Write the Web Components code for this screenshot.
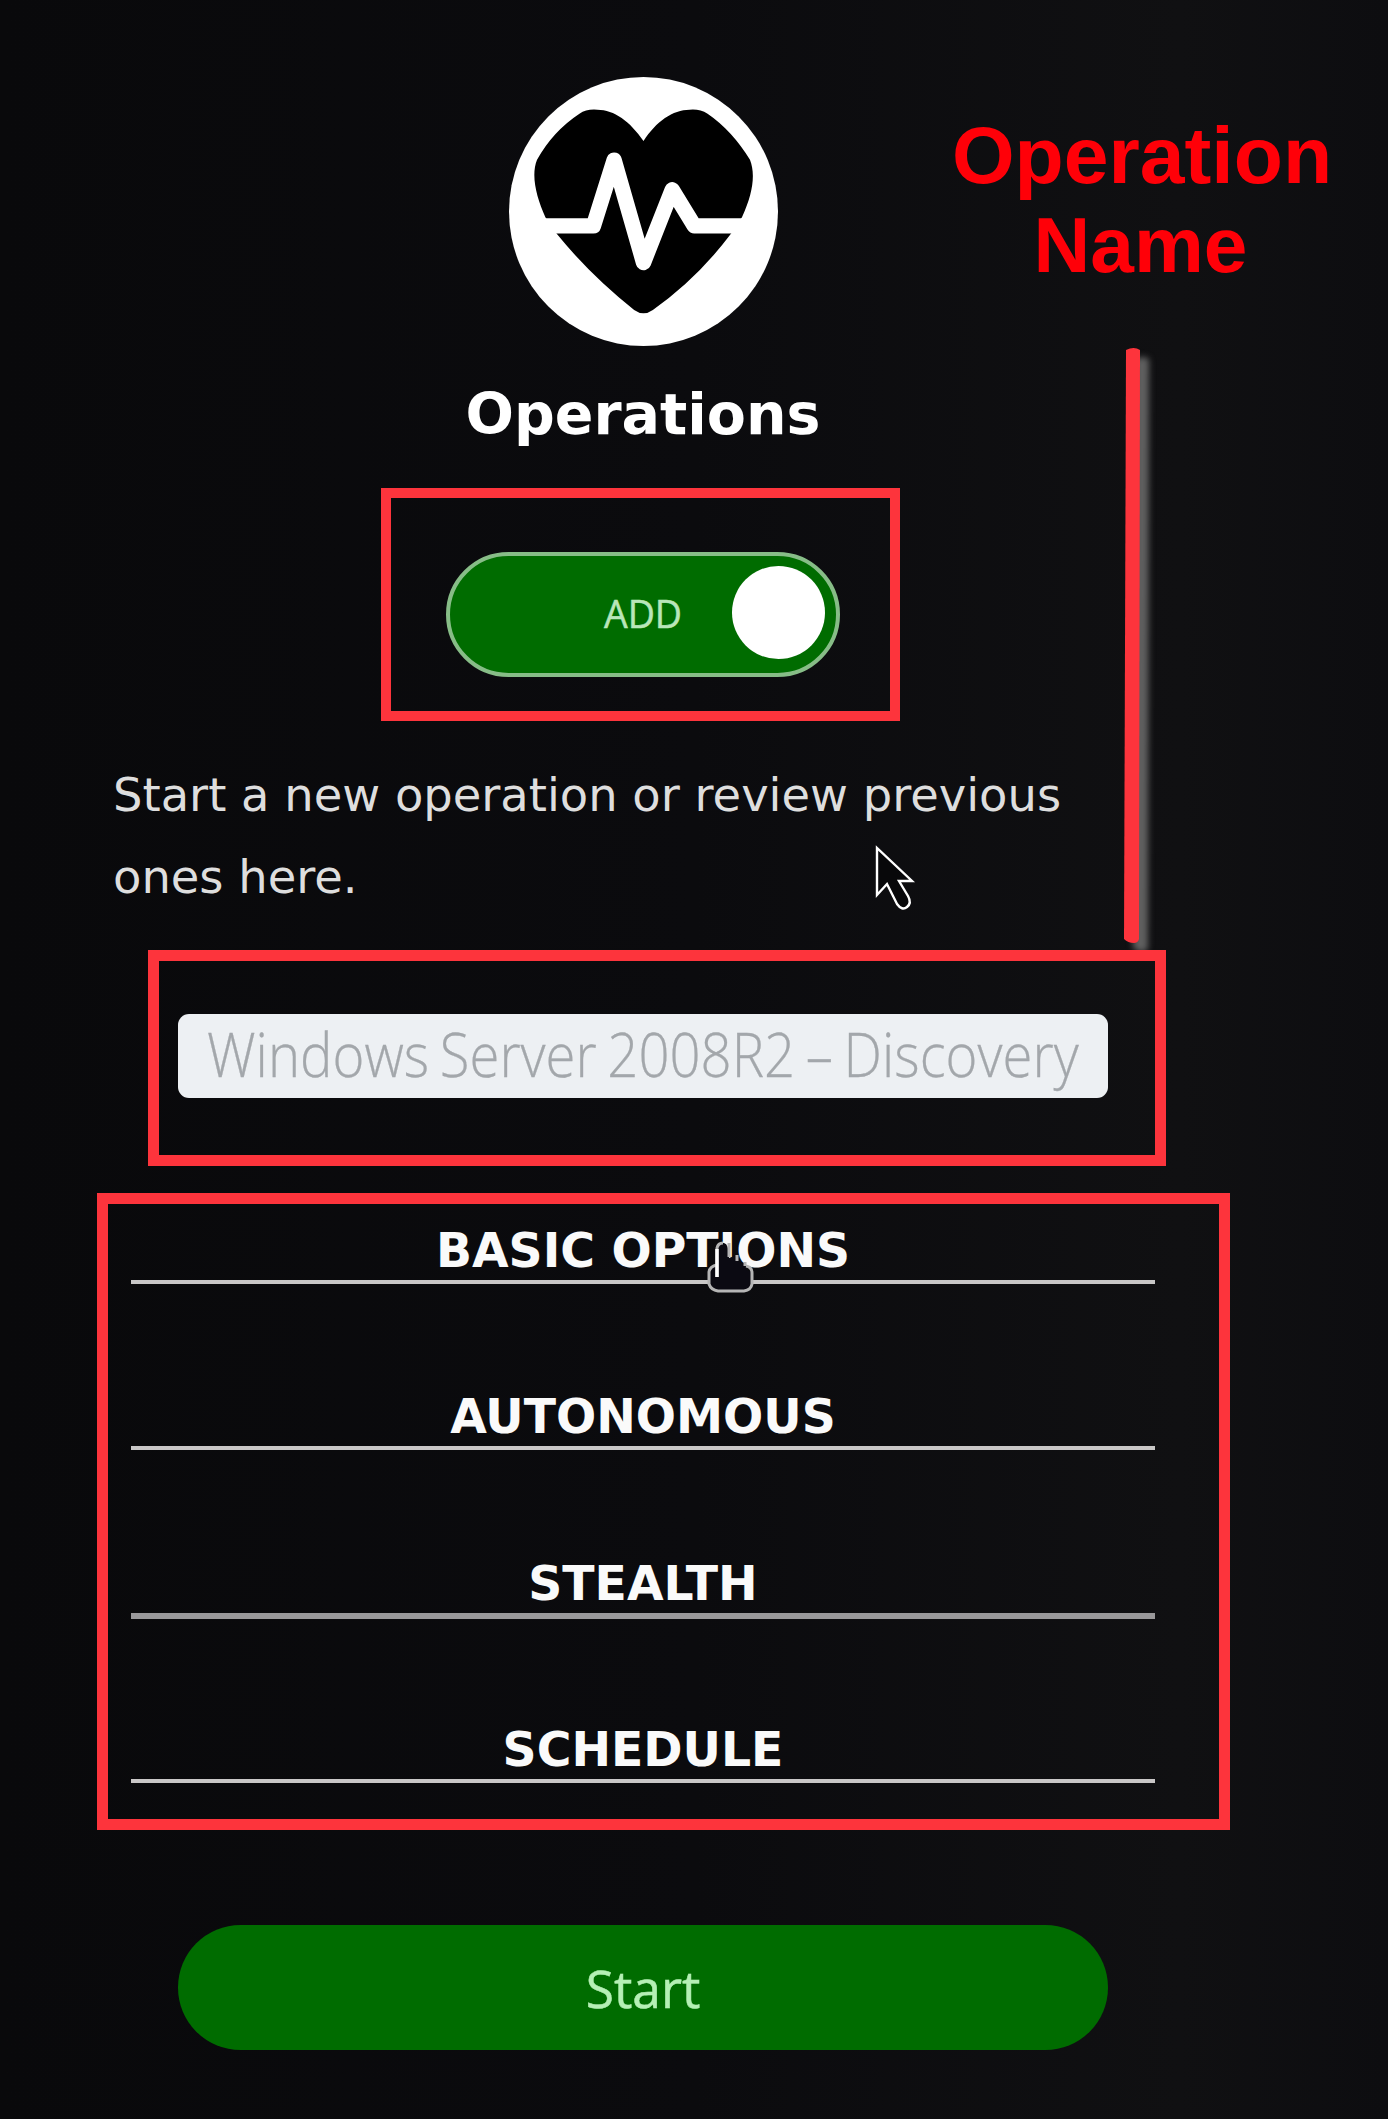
<!DOCTYPE html>
<html lang="en">
<head>
<meta charset="utf-8">
<title>Operations</title>
<style>
body{margin:0;background:#0b0b0d}
</style>
</head>
<body>
<operations-page></operations-page>
<script>
const define = (name, html) => customElements.define(name, class extends HTMLElement {
  constructor() {
    super();
    this.attachShadow({ mode: 'open' }).innerHTML = html;
  }
});

define('heart-badge', `
<style>:host{display:block;width:269px;height:269px}svg{display:block;width:100%;height:100%}</style>
<svg viewBox="57 50 806 806">
  <circle cx="460" cy="453" r="403" fill="#fff"/>
  <path fill="#000" d="M460 242C420 183 372 148 322 148Q290 145 268 160Q188 213 141 298C122 345 139 410 166 470L200 520Q300 643 432 748Q460 768 488 748Q620 655 722 520L755 470C788 400 796 340 779 298Q725 210 652 160Q628 145 598 148C548 148 498 183 460 242Z"/>
  <path fill="none" stroke="#fff" stroke-width="46" stroke-linejoin="round" d="M140 496H310L372 299L460 606L546 388L612 496H785"/>
</svg>`);

define('mark-frame', `
<style>:host{display:flex;box-sizing:border-box;border:var(--edge,11px) solid #fd343c}</style><slot></slot>`);

define('mode-toggle', `
<style>
:host{display:grid;grid-template-columns:1fr auto 1fr;align-items:center;box-sizing:border-box;width:394px;height:125px;border:4px solid #87bd87;border-radius:63px;background:#006c00;color:#b9e6b9;font:37.5px/50px "Open Sans",sans-serif}
span{grid-column:2;position:relative;top:-1px;-webkit-text-stroke:.5px}
i{justify-self:end;width:93px;height:93px;margin:0 11px 5px 0;border-radius:50%;background:#fff}
</style><span><slot></slot></span><i></i>`);

define('name-field', `
<style>
:host{display:block;box-sizing:border-box;width:930px;height:84px;padding-left:29px;border-radius:11px;background:#edf0f3;color:#a3a7ab;font:300 61px/80px "Open Sans",sans-serif;white-space:nowrap}
span{display:inline-block;transform:scaleX(.893);transform-origin:0 50%;word-spacing:-4px;-webkit-text-stroke:.3px}
</style><span><slot></slot></span>`);

define('option-section', `
<style>:host{display:block;border-bottom:var(--rule,4px) solid var(--rule-color,#c9c7c7);color:#fafafa;text-align:center;font:bold 47.3px/58px "DejaVu Sans",sans-serif}span{display:block;height:58px}</style><span><slot></slot></span>`);

define('start-button', `
<style>:host{display:flex;align-items:center;justify-content:center;box-sizing:border-box;width:930px;height:125px;padding-top:2px;border-radius:63px;background:#006c00;color:#b5f0b5;font:51.5px/70px "Open Sans",sans-serif;-webkit-text-stroke:.5px}</style><slot></slot>`);

define('call-out', `
<style>:host{display:flex;flex-direction:column;align-items:center;color:#ff0008;font:bold 80.5px/90px "Liberation Sans",Arial,sans-serif}::slotted(.second){font-size:78.5px;padding-right:3px}</style><slot></slot>`);

define('pointer-line', `
<style>:host{display:block;width:40px;height:620px}svg{display:block;filter:drop-shadow(9px 9px 3px #606060)}</style>
<svg width="40" height="620"><path d="M4 3Q12 -1 18 3L17 592Q16 596 12 596Q6 596 2 592Z" fill="#fd343c"/></svg>`);

define('arrow-cursor', `
<style>:host{display:block}svg{display:block}</style>
<svg width="42" height="70" viewBox="0 0 42 70"><path d="M2 4V51L12 40L22 60Q27 67 32 63Q37 59 33 52L24 37H37Z" fill="#08080a" stroke="#fff" stroke-width="2.4"/></svg>`);

define('hand-cursor', `
<style>:host{display:block}svg{display:block}</style>
<svg width="50" height="54" viewBox="0 0 50 54"><path d="M11 36V7Q12 1 18 2Q23 3 23 17L31 14L33 21L39 22L40 29L46 31V43Q43 50 38 50H12Q5 50 3 43V30Q5 25 11 24Z" fill="#0b0a12"/><path d="M11 36V7Q12 2 17 2M23 2V16M31 14V20M39 21V25M11 24Q4 25 3 31V43Q5 49 12 50H38Q45 49 46 43V32Q46 26 40 25" fill="none" stroke="#b5b5b5" stroke-width="3"/><path d="M11 8V36" stroke="#fff" stroke-width="3.5"/></svg>`);

define('operations-page', `
<style>
:host{display:flex;flex-direction:column;align-items:flex-start;position:relative;box-sizing:border-box;width:1388px;height:2119px;padding-top:77px;overflow:hidden;background:linear-gradient(90deg,#09090b,#0b0b0e 50%,#101012 85%,#0d0d10)}
heart-badge{margin-left:508.5px}
h1{width:1286px;margin:33px 0 0;color:#fff;text-align:center;font:bold 57px/70px "DejaVu Sans",sans-serif}
.mode{--edge:10px;width:519px;height:233px;margin:39px 0 0 381px;padding:54px 0 0 55px}
p{margin:34px 0 0 113px;color:#dedede;font:46.4px/81.6px "DejaVu Sans",sans-serif;white-space:nowrap}
.name{position:relative;width:1018px;height:216px;margin:31.8px 0 0 148px;padding:53px 0 0 19px}
.options{width:1133px;height:637px;margin:27px 0 0 97px;padding:18px 64px 0 23px;flex-direction:column;gap:104.5px}
start-button{margin:95px 0 0 178px}
call-out,pointer-line,arrow-cursor,hand-cursor{position:absolute}
call-out{left:942px;top:110px;width:400px}
pointer-line{left:1122px;top:347px}
arrow-cursor{left:875px;top:844px}
hand-cursor{left:706px;top:1241px}
</style>
<heart-badge></heart-badge>
<h1>Operations</h1>
<mark-frame class="mode"><mode-toggle>ADD</mode-toggle></mark-frame>
<p>Start a new operation or review previous<br>ones here.</p>
<pointer-line></pointer-line>
<mark-frame class="name"><name-field>Windows Server 2008R2 – Discovery</name-field></mark-frame>
<mark-frame class="options">
  <option-section>BASIC OPTIONS</option-section>
  <option-section>AUTONOMOUS</option-section>
  <option-section style="--rule:6px;--rule-color:#99989a;margin-bottom:-2px">STEALTH</option-section>
  <option-section>SCHEDULE</option-section>
</mark-frame>
<start-button>Start</start-button>
<call-out><span>Operation</span><span class="second">Name</span></call-out>
<arrow-cursor></arrow-cursor>
<hand-cursor></hand-cursor>`);
</script>
</body>
</html>
